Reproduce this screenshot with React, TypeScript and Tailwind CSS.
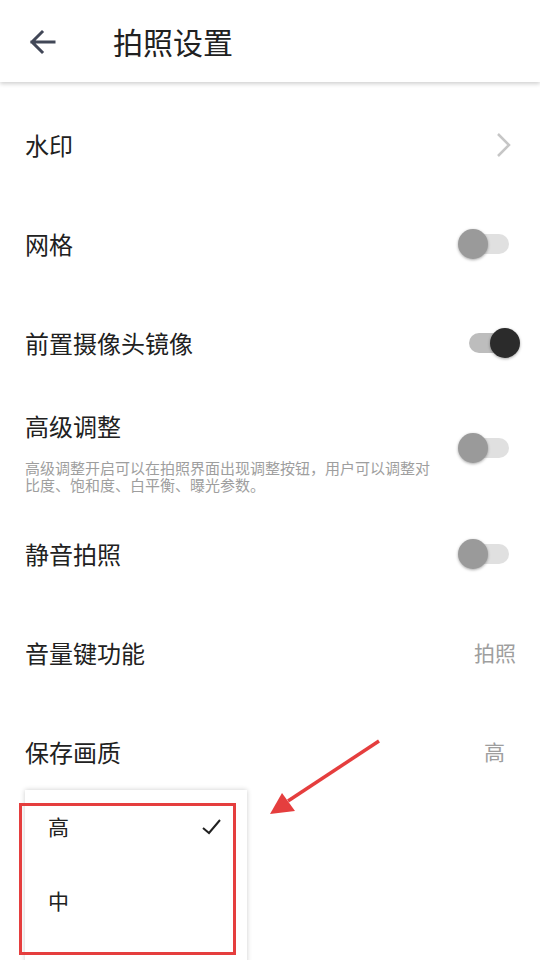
import React from 'react';

const font = "font-['Noto_Sans_CJK_SC','Noto_Sans',Roboto,sans-serif]";

function Toggle({ on, className }: { on?: boolean; className?: string }) {
  return (
    <div className={`relative w-[50px] h-[30px] shrink-0 ${className ?? ''}`}>
      <div
        className={`absolute left-0 right-0 top-[5px] h-[20px] rounded-full ${
          on ? 'bg-[#bdbdbd]' : 'bg-[#e0e0e0]'
        }`}
      />
      <div
        className={`absolute top-0 w-[30px] h-[30px] rounded-full shadow-[0_1px_3px_rgba(0,0,0,0.35)] ${
          on ? 'right-[-1px] bg-[#2b2b2b]' : 'left-[-1px] bg-[#9a9a9a]'
        }`}
      />
    </div>
  );
}

function Row({ label, children }: { label: string; children?: React.ReactNode }) {
  return (
    <div className="h-[99px] flex items-center justify-between pl-[25px]">
      <span className="text-[24px] leading-[32px] text-[#212121]">{label}</span>
      {children}
    </div>
  );
}

export default function App() {
  return (
    <div className={`relative w-[540px] h-[960px] overflow-hidden bg-white ${font}`}>
      {/* Toolbar */}
      <div className="relative z-10 h-[82px] flex items-center bg-white shadow-[0_2px_4px_rgba(0,0,0,0.18)]">
        <svg width="60" height="40" viewBox="0 0 60 40">
          <path d="M54 21 H32 M42 11 L32 21 L42 31" fill="none" stroke="#414757" strokeWidth="3" strokeLinecap="square" />
        </svg>
        <h1 className="ml-[53px] text-[30px] leading-[40px] text-[#212121]">拍照设置</h1>
      </div>

      {/* Settings list */}
      <div className="pt-[13px]">
        <Row label="水印">
          <svg width="16" height="26" viewBox="0 0 16 26" className="mr-[28px]">
            <path d="M2 2 L13 13 L2 24" fill="none" stroke="#c6c6c6" strokeWidth="2.5" />
          </svg>
        </Row>
        <Row label="网格">
          <Toggle className="mr-[31px]" />
        </Row>
        <Row label="前置摄像头镜像">
          <Toggle on className="mr-[21px]" />
        </Row>

        <div className="h-[112px] flex items-center justify-between pl-[25px]">
          <div className="self-start pt-[18px]">
            <div className="text-[24px] leading-[32px] text-[#212121]">高级调整</div>
            <p className="mt-[17px] w-[410px] text-[15px] leading-[17px] text-[#9e9e9e]">
              高级调整开启可以在拍照界面出现调整按钮，用户可以调整对比度、饱和度、白平衡、曝光参数。
            </p>
          </div>
          <Toggle className="mr-[31px]" />
        </div>

        <Row label="静音拍照">
          <Toggle className="mr-[31px]" />
        </Row>
        <Row label="音量键功能">
          <span className="mr-[24px] text-[21px] text-[#9e9e9e]">拍照</span>
        </Row>
        <Row label="保存画质">
          <span className="mr-[35px] text-[21px] text-[#9e9e9e]">高</span>
        </Row>
      </div>

      {/* Popup menu */}
      <div className="absolute left-[25px] top-[790px] w-[222px] h-[200px] bg-white shadow-[0_0_5px_rgba(0,0,0,0.2)]">
        <div className="h-[74px] flex items-center justify-between pl-[23px] pr-[24px]">
          <span className="text-[21px] text-[#212121]">高</span>
          <svg width="22" height="18" viewBox="0 0 22 18">
            <path d="M2 10 L8 15 L19 2" fill="none" stroke="#212121" strokeWidth="2" />
          </svg>
        </div>
        <div className="h-[74px] flex items-center pl-[23px]">
          <span className="text-[21px] text-[#212121]">中</span>
        </div>
      </div>

      {/* Annotation */}
      <div className="absolute left-[19px] top-[803px] w-[217px] h-[152px] border-[3px] border-[#e53e3e]" />
      <svg className="absolute left-0 top-0 pointer-events-none" width="540" height="960" viewBox="0 0 540 960">
        <line x1="379" y1="741" x2="288" y2="801" stroke="#e53e3e" strokeWidth="3.5" />
        <polygon points="270,814 282,793 295,811" fill="#e53e3e" />
      </svg>
    </div>
  );
}
